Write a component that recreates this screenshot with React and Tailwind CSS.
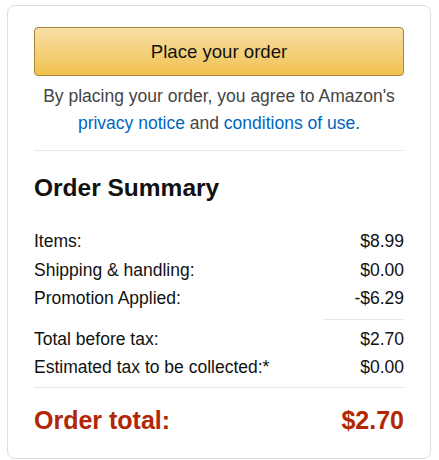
export default function App() {
  const rows = [
    ["Items:", "$8.99"],
    ["Shipping & handling:", "$0.00"],
    ["Promotion Applied:", "-$6.29"],
  ];
  const taxRows = [
    ["Total before tax:", "$2.70"],
    ["Estimated tax to be collected:*", "$0.00"],
  ];

  return (
    <div className="min-h-[460px] bg-white pl-[7px] pr-[8px] pt-[5px] font-['Liberation_Sans',Arial,sans-serif]">
      <div className="rounded-[8px] border border-[#dddddd] px-[26px] pb-[23px] pt-[21px]">
        {/* place order */}
        <button className="flex h-[49px] w-full items-center justify-center rounded-[4px] border border-[#a88734] bg-gradient-to-b from-[#f7dfa5] to-[#f0c14b] text-[18.6px] text-[#111111]">
          Place your order
        </button>
        <p className="mt-[7px] text-center text-[17.5px] leading-[27px] text-[#444444]">
          By placing your order, you agree to Amazon's
          <br />
          <span className="text-[#0066c0]">privacy notice</span> and{" "}
          <span className="text-[#0066c0]">conditions of use</span>.
        </p>
        <div className="mt-[13px] h-px bg-[#e7e7e7]" />

        {/* summary */}
        <h2 className="mt-[22px] text-[24.5px] font-bold leading-[30px] text-[#111111]">Order Summary</h2>
        <div className="mt-[24px] text-[17.5px] leading-[28.5px] text-[#111111]">
          {rows.map(([label, value]) => (
            <div key={label} className="flex justify-between">
              <span>{label}</span>
              <span>{value}</span>
            </div>
          ))}
          <div className="mt-[6px] flex justify-end">
            <div className="h-px w-[81px] bg-[#e7e7e7]" />
          </div>
          <div className="pt-[5px]">
            {taxRows.map(([label, value]) => (
              <div key={label} className="flex justify-between">
                <span>{label}</span>
                <span>{value}</span>
              </div>
            ))}
          </div>
          <div className="mt-[5px] h-px bg-[#e7e7e7]" />
        </div>
        <div className="mt-[17px] flex justify-between text-[25px] font-bold leading-[30px] text-[#b12704]">
          <span>Order total:</span>
          <span>$2.70</span>
        </div>
      </div>
    </div>
  );
}
